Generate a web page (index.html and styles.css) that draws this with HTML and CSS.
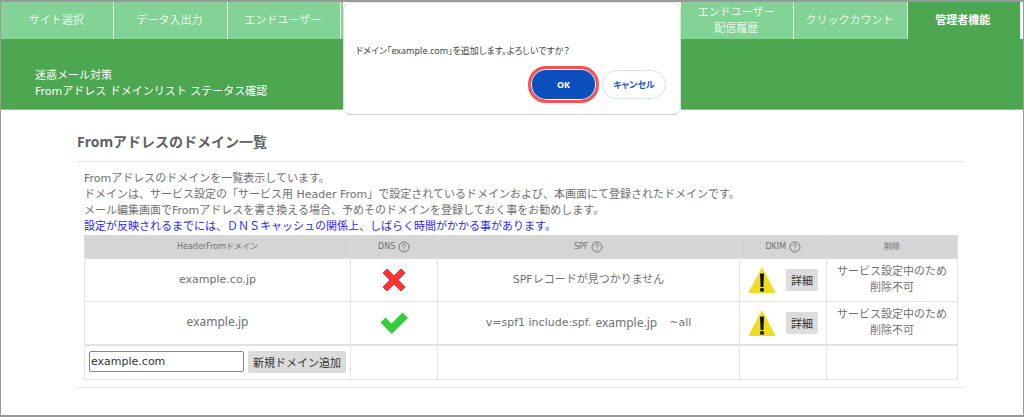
FILE: index.html
```
<!DOCTYPE html>
<html lang="ja">
<head>
    <meta charset="UTF-8">
    <meta name="viewport" content="width=device-width, initial-scale=1.0">
    <title>Fromアドレス ドメインリスト ステータス確認</title>
    <link rel="stylesheet" href="styles.css">
</head>
<body>
    <!-- アイコン定義 -->
    <svg class="icon-defs" aria-hidden="true">
        <symbol id="icon-help" viewBox="0 0 12 12">
            <circle cx="6" cy="6" r="5" fill="none" stroke="#777" stroke-width="1"/>
            <path d="M4.4 4.9C4.4 3.8 5.1 3.2 6 3.2S7.6 3.8 7.6 4.6C7.6 5.6 6 5.7 6 7" fill="none" stroke="#777" stroke-width="1"/>
            <circle cx="6" cy="8.6" r="0.7" fill="#777"/>
        </symbol>
        <symbol id="icon-cross" viewBox="0 0 24 24">
            <path d="M1 5L5 1L12 8L19 1L23 5L16 12L23 19L19 23L12 16L5 23L1 19L8 12Z" fill="#ff3131" stroke="#ff3131" stroke-width="1" stroke-linejoin="round"/>
        </symbol>
        <symbol id="icon-check" viewBox="0 0 28 22">
            <path d="M0.500 10.500L5.500 5.500L11.500 11.500L22.500 0.500L28 6L11.800 22Z" fill="#37cc3d"/>
        </symbol>
        <symbol id="icon-warn" viewBox="0 0 28 26">
            <path d="M14 1L27 25.500H1Z" fill="#eedd22" stroke="#eedd22" stroke-width="1" stroke-linejoin="round"/>
            <path d="M12 6.500H16L15.400 20H12.600Z" fill="#111"/>
            <rect x="12.200" y="21.200" width="3.600" height="3.300" fill="#111"/>
        </symbol>
    </svg>

    <div class="page">
        <nav class="tabs">
            <a class="tab" href="#">サイト選択</a>
            <a class="tab" href="#">データ入出力</a>
            <a class="tab" href="#">エンドユーザー</a>
            <span class="tab"></span>
            <span class="tab"></span>
            <span class="tab"></span>
            <a class="tab" href="#">エンドユーザー<br>配信履歴</a>
            <a class="tab" href="#">クリックカウント</a>
            <a class="tab active" href="#">管理者機能</a>
        </nav>

        <header class="page-header">
            <div>迷惑メール対策</div>
            <div>Fromアドレス ドメインリスト ステータス確認</div>
        </header>

        <main class="content">
            <h1 class="title">Fromアドレスのドメイン一覧</h1>

            <div class="section">
                <p class="text">Fromアドレスのドメインを一覧表示しています。</p>
                <p class="text">ドメインは、サービス設定の「サービス用 Header From」で設定されているドメインおよび、本画面にて登録されたドメインです。</p>
                <p class="text">メール編集画面でFromアドレスを書き換える場合、予めそのドメインを登録しておく事をお勧めします。</p>
                <p class="text notice">設定が反映されるまでには、ＤＮＳキャッシュの関係上、しばらく時間がかかる事があります。</p>

                <table class="domain-table">
                    <colgroup>
                        <col class="col-domain">
                        <col class="col-dns">
                        <col class="col-spf">
                        <col class="col-dkim">
                        <col class="col-delete">
                    </colgroup>
                    <thead>
                        <tr>
                            <th>HeaderFromドメイン</th>
                            <th>DNS <svg class="help"><use href="#icon-help"/></svg></th>
                            <th>SPF <svg class="help"><use href="#icon-help"/></svg></th>
                            <th>DKIM <svg class="help"><use href="#icon-help"/></svg></th>
                            <th>削除</th>
                        </tr>
                    </thead>
                    <tbody>
                        <tr>
                            <td>example.co.jp</td>
                            <td><svg class="cross"><use href="#icon-cross"/></svg></td>
                            <td>SPFレコードが見つかりません</td>
                            <td>
                                <div class="dkim">
                                    <svg class="warn"><use href="#icon-warn"/></svg>
                                    <button type="button" class="btn">詳細</button>
                                </div>
                            </td>
                            <td>サービス設定中のため<br>削除不可</td>
                        </tr>
                        <tr>
                            <td><span class="domain">example.jp</span></td>
                            <td><svg class="check"><use href="#icon-check"/></svg></td>
                            <td>
                                <div class="spf">
                                    <span>v=spf1 include:spf.</span>
                                    <span class="domain">example.jp</span>
                                    <span class="all">~all</span>
                                </div>
                            </td>
                            <td>
                                <div class="dkim">
                                    <svg class="warn"><use href="#icon-warn"/></svg>
                                    <button type="button" class="btn">詳細</button>
                                </div>
                            </td>
                            <td>サービス設定中のため<br>削除不可</td>
                        </tr>
                    </tbody>
                    <tfoot>
                        <tr>
                            <td>
                                <form class="add-form">
                                    <input type="text" name="domain" class="domain-input" value="example.com" aria-label="ドメイン">
                                    <button type="button" class="btn">新規ドメイン追加</button>
                                </form>
                            </td>
                            <td></td>
                            <td></td>
                            <td></td>
                            <td></td>
                        </tr>
                    </tfoot>
                </table>
            </div>
        </main>

        <!-- 確認ダイアログ -->
        <div class="dialog-wrap">
            <div class="dialog" role="dialog" aria-label="確認">
                <p class="dialog-text">ドメイン「example.com」を追加します。よろしいですか？</p>
                <div class="dialog-buttons">
                    <button type="button" class="dialog-btn ok">OK</button>
                    <button type="button" class="dialog-btn cancel">キャンセル</button>
                </div>
            </div>
        </div>
    </div>
</body>
</html>
```
FILE: styles.css
```
* {
    box-sizing: border-box;
}

body {
    margin: 0;
    background-color: #fff;
    color: #707070;
    font-family: "DejaVu Sans", "Noto Sans CJK JP", sans-serif;
    font-size: 11px;
    line-height: 16px;
}

button,
input {
    font-family: inherit;
    font-size: 11px;
}

.icon-defs {
    display: none;
}

.page {
    position: relative;
    min-height: 100vh;
    border: 1px solid #999;
    border-top-width: 2px;
    border-bottom-width: 2px;
}

/* タブ */
.tabs {
    display: grid;
    grid-template-columns: repeat(9, 1fr);
    height: 37px;
    padding-right: 2px;
}

.tab {
    display: flex;
    align-items: center;
    justify-content: center;
    padding-right: 2px;
    background-color: #83d296;
    border-right: 1px solid #e4f6e8;
    color: #e8f8eb;
    text-align: center;
    text-decoration: none;
}

.tab.active {
    background-color: #4ca750;
    color: #fff;
    font-weight: bold;
}

.page-header {
    height: 71px;
    padding: 29px 34px 0;
    background-color: #4ca750;
    border-bottom: 1px solid #88c78b;
    color: #fff;
}

/* 本文 */
.content {
    margin: 0 59px 0 76px;
    padding-top: 22px;
}

.title {
    margin: 0;
    padding-bottom: 9px;
    border-bottom: 1px solid #e5e5e5;
    color: #606060;
    font-family: "Noto Sans", "Noto Sans CJK JP", sans-serif;
    font-size: 14px;
    line-height: 20px;
}

.section {
    padding: 9px 6px 7px 7px;
    border-bottom: 1px solid #e5e5e5;
}

.text {
    margin: 0;
}

.notice {
    color: #2a1fff;
}

/* ドメイン一覧 */
.domain-table {
    width: 100%;
    border-collapse: collapse;
    table-layout: fixed;
}

.col-domain {
    width: 266px;
}

.col-dns,
.col-dkim {
    width: 87px;
}

.col-delete {
    width: 131px;
}

.domain-table th,
.domain-table td {
    padding: 0;
    border: 1px solid #e5e5e5;
    text-align: center;
    vertical-align: middle;
}

.domain-table th {
    height: 23px;
    background-color: #d5d5d5;
    border-color: #dedede;
    font-size: 8px;
    font-weight: normal;
}

.domain-table td {
    height: 43px;
}

.domain-table tfoot td {
    height: 35px;
    border-top: 2px solid #e2e2e2;
}

.domain-table svg {
    vertical-align: middle;
}

.help {
    width: 12px;
    height: 12px;
}

.cross {
    width: 24px;
    height: 24px;
}

.check {
    width: 28px;
    height: 22px;
}

.warn {
    width: 28px;
    height: 26px;
}

.dkim {
    display: flex;
    align-items: center;
    justify-content: center;
    gap: 10px;
}

.domain {
    font-family: "Noto Sans", sans-serif;
    font-size: 12px;
}

.spf {
    display: flex;
    justify-content: center;
    gap: 4px;
}

.all {
    padding-left: 8px;
}

.btn {
    height: 22px;
    padding: 0 5px;
    background-color: #dcdcdc;
    border: none;
    border-radius: 2px;
    color: #333;
    white-space: nowrap;
}

.add-form {
    display: flex;
    gap: 4px;
    margin: 0;
    padding: 0 4px;
}

.domain-input {
    flex: 1;
    min-width: 0;
    height: 21px;
    padding: 0 1px;
    border: 1px solid #858585;
    border-radius: 2px;
    color: #333;
}

/* ダイアログ */
.dialog-wrap {
    position: absolute;
    top: 0;
    left: 50%;
    width: 338px;
    transform: translateX(-50%);
    background-color: #fff;
}

.dialog {
    padding: 40px 14px 11px 12px;
    border: 1px solid #e0e0e0;
    border-bottom-color: #d0d0d0;
    border-radius: 8px;
    font-family: "Noto Sans", "Noto Sans CJK JP", sans-serif;
}

.dialog-text {
    margin: 0 0 7px;
    color: #444;
    font-size: 9px;
    font-feature-settings: "palt";
}

.dialog-buttons {
    display: flex;
    align-items: center;
    justify-content: flex-end;
    gap: 3px;
}

.dialog-btn {
    height: 29px;
    padding: 0;
    border-radius: 18px;
    font-size: 9px;
    font-weight: bold;
    font-feature-settings: "palt";
}

.ok {
    width: 71px;
    height: 37px;
    background-color: #0b50bd;
    border: 3px solid #ff5050;
    box-shadow: inset 0 0 0 1px #fff;
    color: #fff;
}

.cancel {
    width: 64px;
    background-color: #fff;
    border: 1px solid #cfe0fb;
    color: #2458c4;
}
```
